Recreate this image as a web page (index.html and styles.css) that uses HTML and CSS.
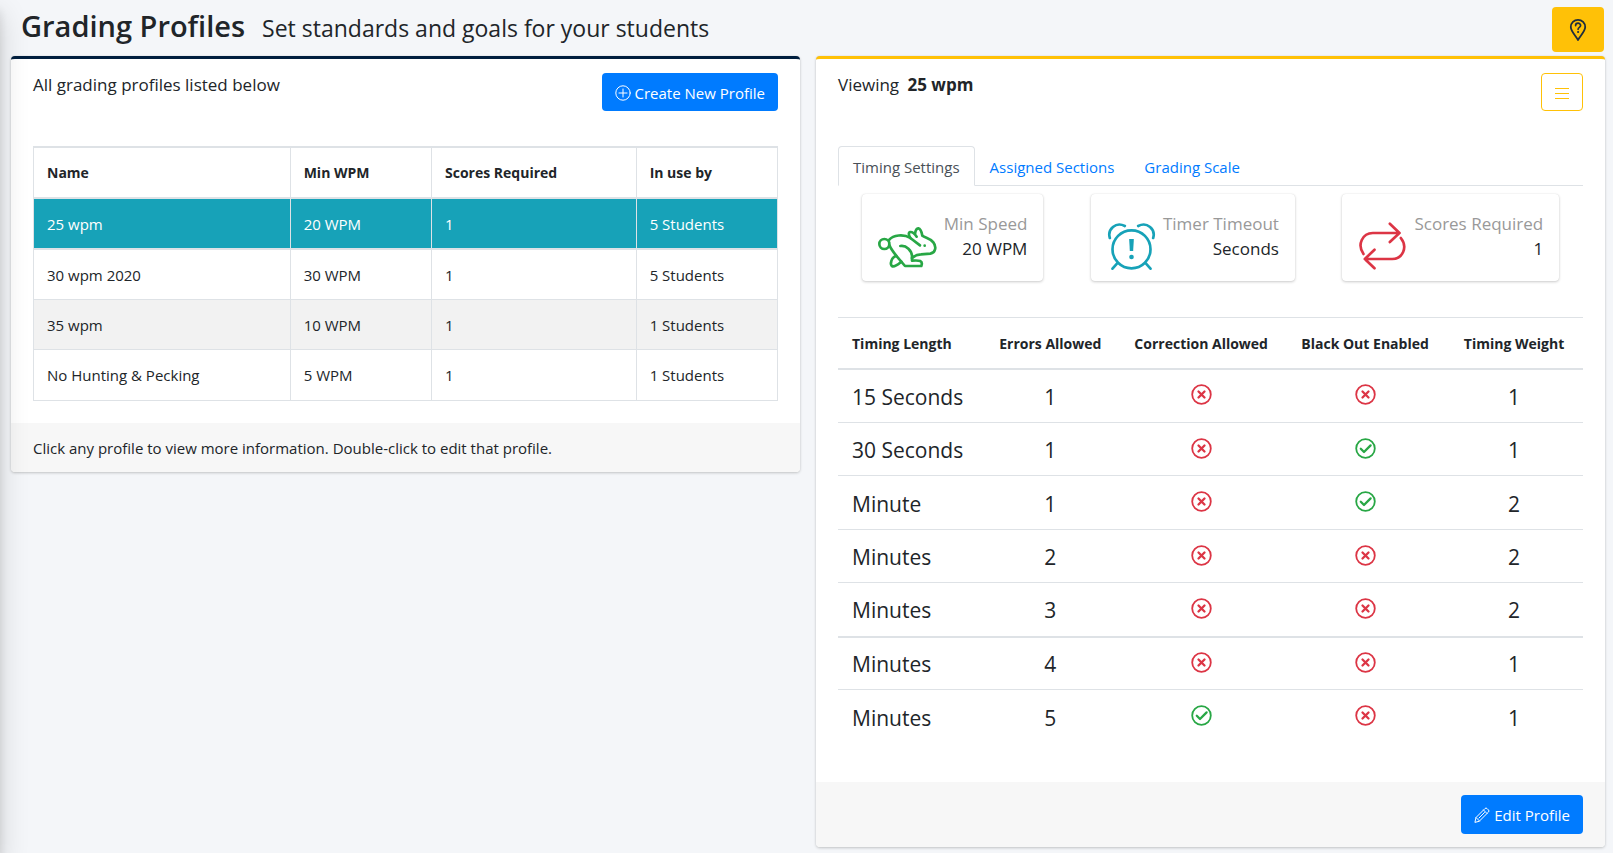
FILE: index.html
```html
<!DOCTYPE html>
<html lang="en">
<head>
  <meta charset="utf-8">
  <title>Grading Profiles</title>
  <link rel="stylesheet" href="styles.css">
</head>
<body>
  <svg class="sprite" aria-hidden="true">
    <symbol id="no" viewBox="0 0 21 21">
      <circle cx="10.5" cy="10.5" r="9.3" stroke-width="1.8"/>
      <path d="M7.5 7.5l6 6M13.5 7.5l-6 6" stroke-width="2.3"/>
    </symbol>
    <symbol id="yes" viewBox="0 0 21 21">
      <circle cx="10.5" cy="10.5" r="9.3" stroke-width="1.8"/>
      <path d="M5.8 10.8l3.2 3.2 6.600-6.600" stroke-width="2.3"/>
    </symbol>
  </svg>

  <header class="page-header">
    <h1>Grading Profiles</h1>
    <p class="subtitle">Set standards and goals for your students</p>
    <button type="button" class="btn-help" aria-label="Help">
      <svg width="18" height="24" viewBox="0 0 18 24"><path d="M9 22C6 17 1.800 13 1.800 9a7.200 7.200 0 0 1 14.400 0c0 4-4.200 8-7.200 13z" stroke-width="1.800"/><path d="M6.600 7.600c0-3.200 5-3.200 5 0 0 1.900-2.500 1.700-2.500 3.700" stroke-width="1.700"/><circle cx="9.100" cy="14" r="1.100" class="solid"/></svg>
    </button>
  </header>

  <main class="columns">
    <section class="card card-navy">
      <div class="card-body">
        <div class="card-top">
          <p class="card-title">All grading profiles listed below</p>
          <button type="button" class="btn">
            <svg width="16" height="16" viewBox="0 0 16 16"><circle cx="8" cy="8" r="7.200"/><path d="M8 4v8M4 8h8"/></svg>
            Create New Profile
          </button>
        </div>
        <table class="profiles">
          <colgroup><col class="p-name"><col class="p-wpm"><col class="p-scores"><col class="p-use"></colgroup>
          <thead>
            <tr><th>Name</th><th>Min WPM</th><th>Scores Required</th><th>In use by</th></tr>
          </thead>
          <tbody>
            <tr class="selected"><td>25 wpm</td><td>20 WPM</td><td>1</td><td>5 Students</td></tr>
            <tr><td>30 wpm 2020</td><td>30 WPM</td><td>1</td><td>5 Students</td></tr>
            <tr><td>35 wpm</td><td>10 WPM</td><td>1</td><td>1 Students</td></tr>
            <tr><td>No Hunting &amp; Pecking</td><td>5 WPM</td><td>1</td><td>1 Students</td></tr>
          </tbody>
        </table>
      </div>
      <div class="card-footer">Click any profile to view more information. Double-click to edit that profile.</div>
    </section>

    <section class="card card-yellow">
      <div class="card-body">
        <div class="card-top">
          <p class="card-title">Viewing <b>25 wpm</b></p>
          <button type="button" class="btn-menu" aria-label="Menu">
            <svg width="14" height="12" viewBox="0 0 14 12"><path d="M0 1.500h14M0 6.500h14M0 11.500h14"/></svg>
          </button>
        </div>

        <nav class="tabs">
          <a href="#timing" class="active">Timing Settings</a>
          <a href="#sections">Assigned Sections</a>
          <a href="#scale">Grading Scale</a>
        </nav>

        <div class="stats">
          <div class="stat">
            <svg class="green" width="59" height="48" viewBox="57 34 177 144">
              <circle cx="76" cy="100" r="15"/>
              <path d="M91 87C102 73 134 69 154 82L183 104"/>
              <path d="M154 82C141 61 158 57 173 78"/>
              <path d="M168 70C171 46 185 47 190 75C199 82 214 83 223 95C233 108 230 126 214 129L186 131C176 131 168 134 159 142"/>
              <path d="M91 103C95 114 106 128 114 138L138 166H187C193 150 181 148 159 150V138C159 120 142 103 124 106"/>
              <path d="M112 136C98 138 91 161 100 167C110 169 119 160 127 153"/>
              <circle cx="197" cy="105" r="4" class="solid"/>
            </svg>
            <dl><dt>Min Speed</dt><dd>20 WPM</dd></dl>
          </div>
          <div class="stat">
            <svg class="teal" width="49" height="48" viewBox="62 38 146 144">
              <circle cx="135" cy="120" r="57"/>
              <path d="M70 86C62 60 88 36 115 50M200 86C208 60 182 36 155 50M92 162L78 178M178 162L192 178"/>
              <path d="M128 89h14l-2 36h-10z" class="solid"/>
              <circle cx="135" cy="143" r="7" class="solid"/>
            </svg>
            <dl><dt>Timer Timeout</dt><dd>Seconds</dd></dl>
          </div>
          <div class="stat">
            <svg class="red" width="49" height="48" viewBox="62 38 146 144">
              <path d="M78 134C58 106 75 71 106 71H186M157 43L186 71L157 98M190 86C212 114 195 149 164 149H82M111 121L82 149L111 177"/>
            </svg>
            <dl><dt>Scores Required</dt><dd>1</dd></dl>
          </div>
        </div>

        <table class="timings">
          <colgroup><col class="t-length"><col class="t-errors"><col class="t-correct"><col class="t-black"><col class="t-weight"></colgroup>
          <thead>
            <tr><th>Timing Length</th><th>Errors Allowed</th><th>Correction Allowed</th><th>Black Out Enabled</th><th>Timing Weight</th></tr>
          </thead>
          <tbody>
            <tr><td>15 Seconds</td><td>1</td><td><svg class="mark red" role="img" aria-label="No"><use href="#no"/></svg></td><td><svg class="mark red" role="img" aria-label="No"><use href="#no"/></svg></td><td>1</td></tr>
            <tr><td>30 Seconds</td><td>1</td><td><svg class="mark red" role="img" aria-label="No"><use href="#no"/></svg></td><td><svg class="mark green" role="img" aria-label="Yes"><use href="#yes"/></svg></td><td>1</td></tr>
            <tr><td>Minute</td><td>1</td><td><svg class="mark red" role="img" aria-label="No"><use href="#no"/></svg></td><td><svg class="mark green" role="img" aria-label="Yes"><use href="#yes"/></svg></td><td>2</td></tr>
            <tr><td>Minutes</td><td>2</td><td><svg class="mark red" role="img" aria-label="No"><use href="#no"/></svg></td><td><svg class="mark red" role="img" aria-label="No"><use href="#no"/></svg></td><td>2</td></tr>
            <tr><td>Minutes</td><td>3</td><td><svg class="mark red" role="img" aria-label="No"><use href="#no"/></svg></td><td><svg class="mark red" role="img" aria-label="No"><use href="#no"/></svg></td><td>2</td></tr>
            <tr><td>Minutes</td><td>4</td><td><svg class="mark red" role="img" aria-label="No"><use href="#no"/></svg></td><td><svg class="mark red" role="img" aria-label="No"><use href="#no"/></svg></td><td>1</td></tr>
            <tr><td>Minutes</td><td>5</td><td><svg class="mark green" role="img" aria-label="Yes"><use href="#yes"/></svg></td><td><svg class="mark red" role="img" aria-label="No"><use href="#no"/></svg></td><td>1</td></tr>
          </tbody>
        </table>
      </div>
      <div class="card-footer actions">
        <button type="button" class="btn">
          <svg width="16" height="16" viewBox="0 0 16 16"><path d="M1 15l1-4.500L11 1.500q1-1 2 0l1.500 1.500q1 1 0 2L5.500 14zM2 10.500L5.500 14M9.500 3L13 6.500M5 11l5.500-5.500"/></svg>
          Edit Profile
        </button>
      </div>
    </section>
  </main>
</body>
</html>
```
FILE: styles.css
```css
* { box-sizing: border-box; }
body { margin: 0; background: #f4f6f9; color: #212529; font: 15px/24px "Segoe UI", "Open Sans", sans-serif; }
/* shadow of the off-screen sidebar */
body::before { content: ""; position: fixed; top: 0; bottom: 0; left: -250px; width: 250px; box-shadow: 0 14px 28px rgba(0,0,0,.16), 0 10px 10px rgba(0,0,0,.1); pointer-events: none; z-index: 5; }
h1, p, dl, dd { margin: 0; }
button { font: inherit; cursor: pointer; }
svg { fill: none; stroke: currentColor; stroke-linecap: round; stroke-linejoin: round; flex: none; }
.solid { fill: currentColor; stroke: none; }
.sprite { display: none; }

.page-header { display: flex; align-items: baseline; gap: 17px; height: 56px; padding: 7px 9px 0 21px; }
h1 { font-size: 29px; font-weight: 600; line-height: 38px; }
.subtitle { font-size: 23px; line-height: 38px; }
.btn-help { display: flex; align-items: center; justify-content: center; align-self: flex-start; width: 52px; height: 45px; margin-left: auto; padding: 0; border: 0; border-radius: 4px; background: #ffc107; color: #1f2d3d; }

.columns { display: grid; grid-template-columns: 1fr 1fr; gap: 16px; align-items: start; padding: 0 8px 6px 11px; }
.card { border-top: 3px solid #001f3f; border-radius: 4px; background: #fff; box-shadow: 0 0 1px rgba(0,0,0,.125), 0 1px 3px rgba(0,0,0,.2); }
.card-yellow { border-top-color: #ffc107; }
.card-body { padding: 14px 22px 22px; }
.card-top { display: flex; justify-content: space-between; height: 73px; }
.card-title { font-size: 17px; }
.card-title b { margin-left: 4px; }
.card-footer { padding: 13px 22px 12px; background: #f7f7f7; border-radius: 0 0 4px 4px; }
.actions { display: flex; justify-content: flex-end; padding: 13px 22px; }
.btn { display: flex; align-items: center; gap: 4px; height: 38px; padding: 2px 13px 0; border: 0; border-radius: 4px; background: #007bff; color: #fff; }
.actions .btn { height: 39px; }
.btn-menu { display: flex; align-items: center; justify-content: center; width: 42px; height: 38px; padding: 2px 0 0; border: 1px solid #ffc107; border-radius: 4px; background: #fff; color: #ffc107; }

table { width: 100%; border-collapse: collapse; table-layout: fixed; }
th, td { padding: 0 13px; }
th { font-size: 14px; }
.profiles th, .profiles td { height: 50px; padding-top: 1px; border: 1px solid #dee2e6; text-align: left; }
.profiles th { height: 51px; border-top-width: 2px; border-bottom-width: 2px; }
.profiles .selected td { height: 51px; border-bottom-width: 2px; background: #17a2b8; color: #fff; }
.profiles tr:nth-child(3) td { background: #f2f2f2; }
.profiles tr:last-child td { height: 51px; }
.p-name { width: 34.5%; }
.p-wpm { width: 19%; }
.p-scores { width: 27.5%; }
.p-use { width: 19%; }

.tabs { display: flex; border-bottom: 1px solid #dee2e6; }
.tabs a { height: 40px; margin-bottom: -1px; padding: 8px 14px 0; border: 1px solid transparent; border-radius: 4px 4px 0 0; line-height: 24px; color: #007bff; text-decoration: none; }
.tabs .active { border-color: #dee2e6 #dee2e6 #fff; background: #fff; color: #495057; }

.stats { display: flex; justify-content: space-around; margin: 8px 0 36px; }
.stat { display: flex; gap: 7px; padding: 17px 16px 11px; border-radius: 4px; box-shadow: 0 0 1px rgba(0,0,0,.125), 0 1px 3px rgba(0,0,0,.2); font-size: 17px; line-height: 25px; text-align: right; }
.stat svg { margin-top: 11px; stroke-width: 8px; }
.stat dt { color: #999; }
.green { color: #28a745; }
.teal { color: #17a2b8; }
.red { color: #dc3545; }

.timings { margin-bottom: 16px; }
.timings th { height: 51px; padding: 2px 0 0; border-top: 1px solid #dee2e6; border-bottom: 2px solid #dee2e6; }
.timings td { height: 53px; padding-top: 2px; border-top: 1px solid #dee2e6; font-size: 21px; font-weight: 500; text-align: center; }
.timings tr:nth-child(odd) td { height: 54px; }
.timings th:first-child, .timings td:first-child { padding-left: 14px; text-align: left; }
.timings td:first-child { padding-right: 0; }
.timings tr:nth-child(6) td { border-top-width: 2px; }
.mark { display: block; width: 21px; height: 21px; margin: 0 auto 4px; }
.t-length { width: 19.5%; }
.t-errors { width: 18%; }
.t-correct { width: 22.5%; }
.t-black { width: 21.5%; }
.t-weight { width: 18.5%; }
```
